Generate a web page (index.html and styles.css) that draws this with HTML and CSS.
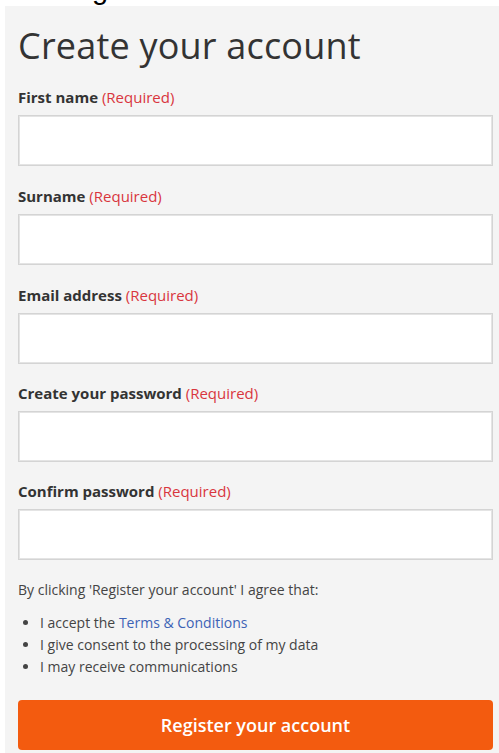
FILE: index.html
```html
<!DOCTYPE html>
<html lang="en">
<head>
<meta charset="utf-8">
<title>Create your account</title>
<link rel="stylesheet" href="styles.css">
</head>
<body>
<div class="strip"><span class="strip-title">Register</span></div>
<main class="panel">
  <h1 class="title">Create your account</h1>
  <form class="form">
    <div class="field">
      <label class="label" for="first">First name <span class="req">(Required)</span></label>
      <input class="input" id="first" type="text">
    </div>
    <div class="field">
      <label class="label" for="surname">Surname <span class="req">(Required)</span></label>
      <input class="input" id="surname" type="text">
    </div>
    <div class="field">
      <label class="label" for="email">Email address <span class="req">(Required)</span></label>
      <input class="input" id="email" type="email">
    </div>
    <div class="field">
      <label class="label" for="pw">Create your password <span class="req">(Required)</span></label>
      <input class="input" id="pw" type="password">
    </div>
    <div class="field">
      <label class="label" for="pw2">Confirm password <span class="req">(Required)</span></label>
      <input class="input" id="pw2" type="password">
    </div>
    <p class="agree">By clicking 'Register your account' I agree that:</p>
    <ul class="terms">
      <li>I accept the <a class="link" href="#">Terms &amp; Conditions</a></li>
      <li>I give consent to the processing of my data</li>
      <li>I may receive communications</li>
    </ul>
    <button class="submit" type="button">Register your account</button>
  </form>
</main>
</body>
</html>
```
FILE: styles.css
```css
html, body {
  margin: 0;
  background: #ffffff;
}

body {
  font-family: "Open Sans", "DejaVu Sans", sans-serif;
  color: #333333;
}

/* page title above the panel, mostly scrolled out of view */
.strip {
  height: 6px;
  overflow: hidden;
  position: relative;
}

.strip-title {
  position: absolute;
  left: 55px;
  top: -27px;
  font-family: "Liberation Sans", Arial, sans-serif;
  font-size: 29px;
  line-height: 32px;
  color: #000;
}

.panel {
  margin-left: 5px;
  background: #f4f4f4;
  padding: 0 6px 3px 13px;
}

.title {
  margin: 0;
  padding-top: 18px;
  font-size: 36px;
  font-weight: 400;
  line-height: 44px;
  color: #333333;
  letter-spacing: 0.2px;
}

.form {
  display: flex;
  flex-direction: column;
  margin-top: 19px;
}

.field {
  display: flex;
  flex-direction: column;
  margin-bottom: 20px;
}

.field:nth-child(n+4) {
  margin-top: -1px;
}

.label {
  font-size: 15px;
  font-weight: 700;
  line-height: 20px;
  margin-bottom: 8px;
  color: #333333;
}

.req {
  font-weight: 400;
  color: #d9363e;
}

.input {
  box-sizing: border-box;
  height: 51px;
  width: 100%;
  margin: 0;
  border: 1px solid #d4d4d4;
  box-shadow: inset 0 0 0 1px #e4e4e4;
  background: #ffffff;
  border-radius: 0;
}

.agree {
  margin: 0;
  font-size: 14px;
  line-height: 20px;
  color: #444444;
}

.terms {
  margin: 12px 0 0;
  padding-left: 22px;
  font-size: 14px;
  line-height: 22px;
  color: #444444;
}

.link {
  color: #3d63b6;
  text-decoration: none;
}

.submit {
  margin-top: 22px;
  height: 50px;
  width: 100%;
  border: 0;
  border-radius: 4px;
  background: #f35b0f;
  color: #ffffff;
  font-family: inherit;
  font-size: 18px;
  font-weight: 600;
}
```
